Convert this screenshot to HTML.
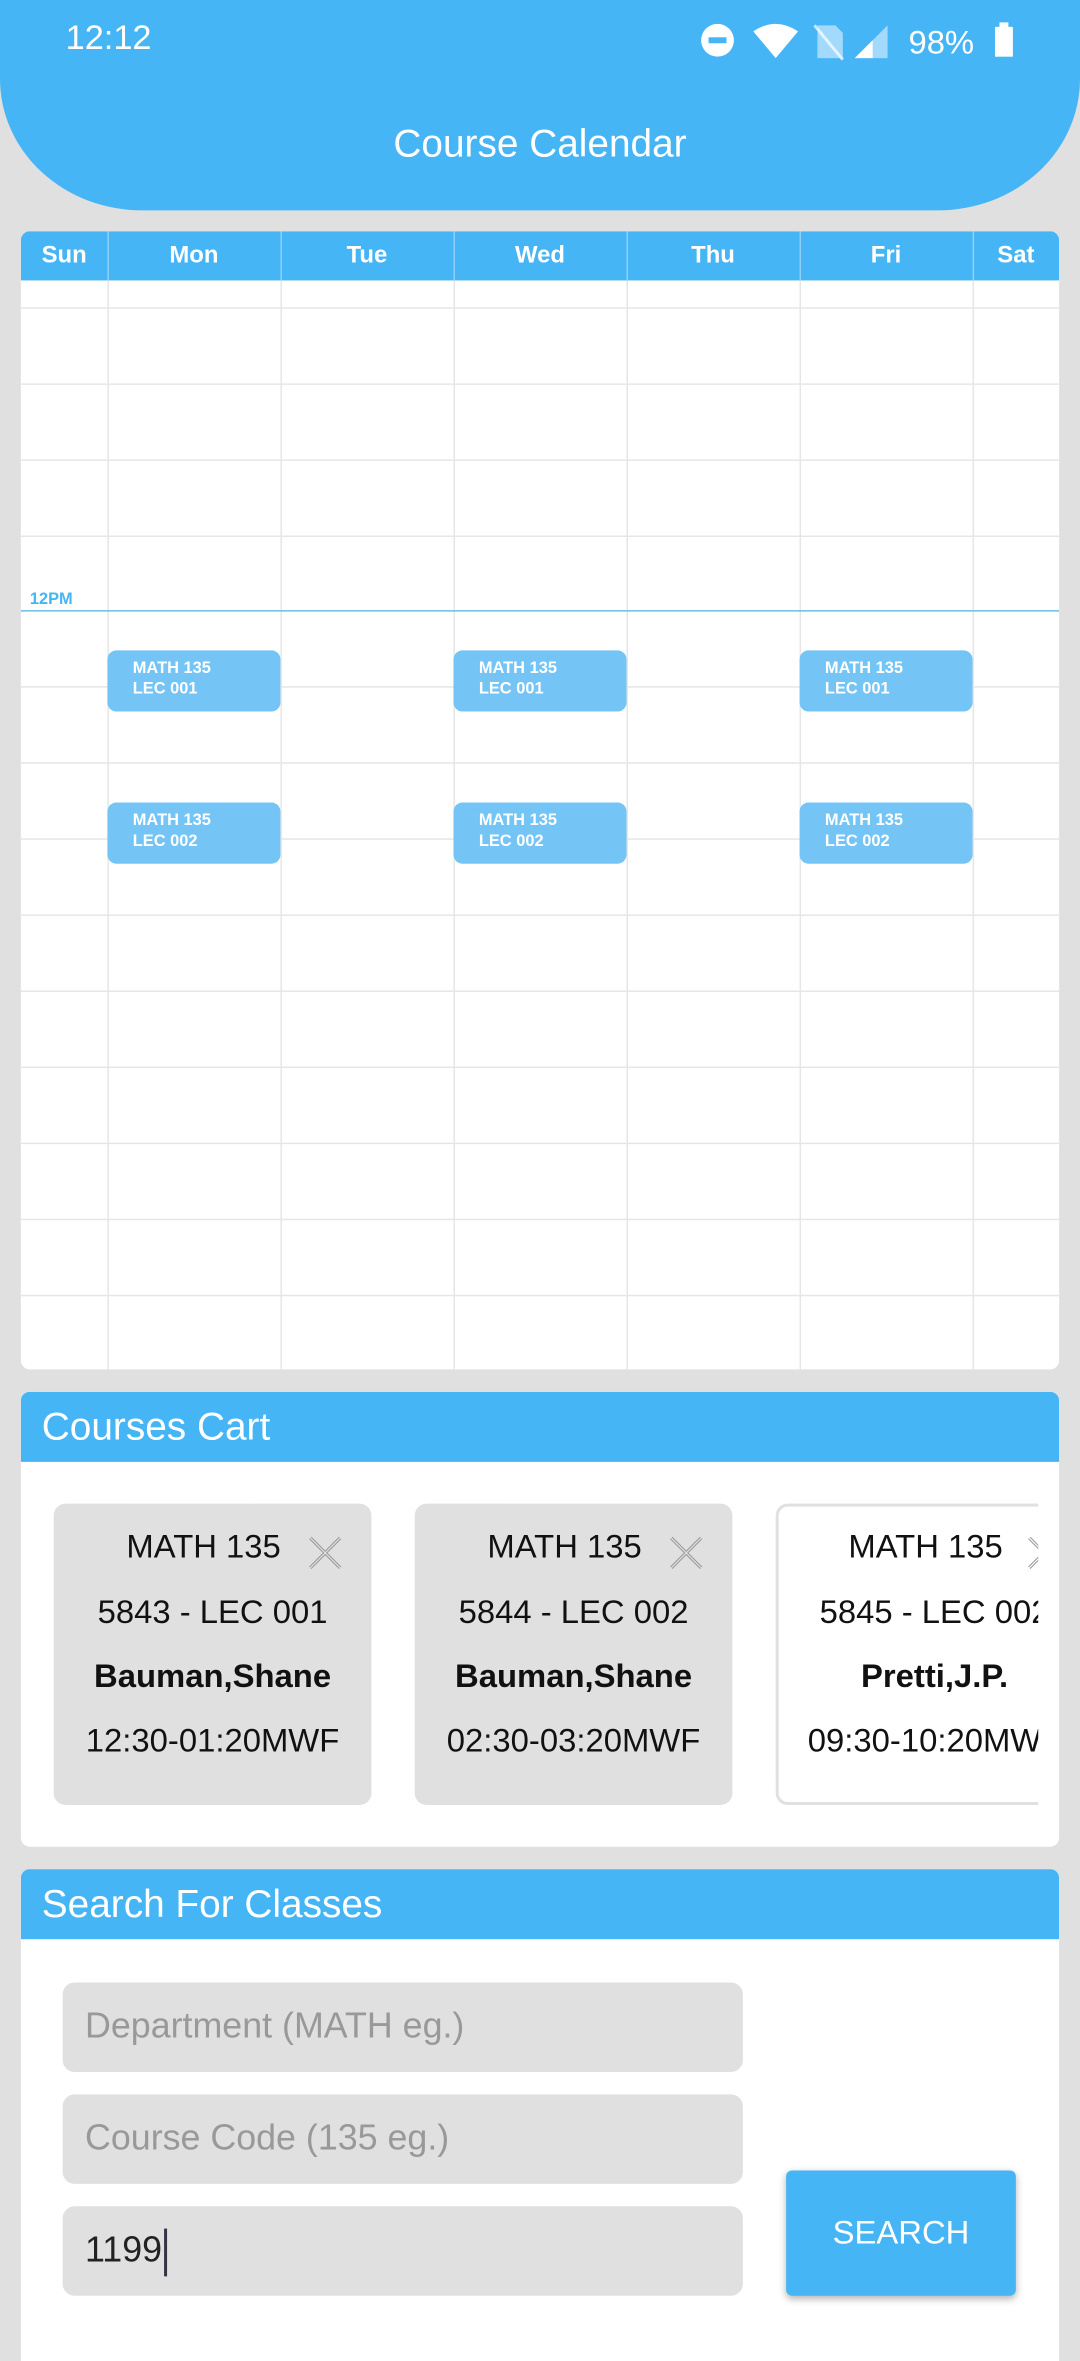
<!DOCTYPE html>
<html><head><meta charset="utf-8"><style>
html,body{margin:0;padding:0;background:#e0e0e0;overflow:hidden}
body{width:1080px;height:2340px}
#w{position:absolute;left:0;top:0;width:724px;height:1569px;transform:scale(1.49171);transform-origin:0 0;font-family:"Liberation Sans",sans-serif}
.a{position:absolute}
.hdr{left:0;top:0;width:724px;height:141px;background:#46b5f6;border-radius:0 0 95px 95px/0 0 88px 88px}
.card{background:#fff;border-radius:6px;overflow:hidden}
.bh{background:#46b5f6;color:#fff}
.hl{position:absolute;left:0;width:696px;height:1px;background:#e6e6e6}
.vl{position:absolute;top:33px;width:1px;height:730px;background:#e6e6e6}
.day{position:absolute;top:0;height:33px;line-height:33px;text-align:center;font-weight:bold;font-size:16px;color:#fff}
.ev{position:absolute;width:116px;height:41px;background:#74c5f6;border-radius:6px;color:#fff;font-weight:bold;font-size:11px;line-height:14px;box-sizing:border-box;padding:5px 0 0 17px}
.cc{position:absolute;top:75px;width:213px;height:202px;background:#e0e0e0;border-radius:8px;text-align:center;font-size:22px;color:#111;box-sizing:border-box}
.cc div{position:absolute;left:0;width:213px;text-align:center;white-space:nowrap}
.inp{position:absolute;left:28px;width:456px;height:60px;background:#e0e0e0;border-radius:8px;font-size:24px;color:#999;line-height:60px;padding-left:15px;box-sizing:border-box}
</style></head><body><div id="w">
<div class="a hdr"></div>
<div class="a" style="left:44px;top:12px;color:#fff;font-size:23px">12:12</div>
<svg class="a" style="left:468px;top:13px" width="220" height="28" viewBox="0 0 220 28">
<circle cx="13" cy="14" r="11" fill="#fff"/><rect x="7" y="12" width="12" height="4" fill="#46b5f6"/>
<path d="M37 8 Q52 -2 67 8 L52 26 Z" fill="#fff"/>
<path d="M80 4 h12 l5 5 v17 h-17z" fill="#fff" opacity=".5"/><path d="M78 4 L97 27" stroke="#fff" stroke-width="2" opacity=".7"/>
<path d="M105 26 L127 4 V26Z" fill="#fff" opacity=".5"/><path d="M105 26 L117 14 V26Z" fill="#fff"/>
<text x="141" y="23" font-family="Liberation Sans" font-size="22" fill="#fff">98%</text>
<rect x="199" y="5" width="12" height="20" fill="#fff"/><rect x="202" y="2" width="6" height="4" fill="#fff"/>
</svg>
<div class="a" style="left:0;width:724px;top:81px;text-align:center;color:#fff;font-size:26px">Course Calendar</div>

<div class="a card" style="left:14px;top:155px;width:696px;height:763px">
<div class="bh" style="position:absolute;left:0;top:0;width:696px;height:33px"></div>
<div class="day" style="left:0;width:58px">Sun</div>
<div class="day" style="left:58px;width:116px">Mon</div>
<div class="day" style="left:174px;width:116px">Tue</div>
<div class="day" style="left:290px;width:116px">Wed</div>
<div class="day" style="left:406px;width:116px">Thu</div>
<div class="day" style="left:522px;width:116px">Fri</div>
<div class="day" style="left:638px;width:58px">Sat</div>
<div class="vl" style="left:58px;top:0;height:33px;background:#8fd0f8"></div><div class="vl" style="left:174px;top:0;height:33px;background:#8fd0f8"></div><div class="vl" style="left:290px;top:0;height:33px;background:#8fd0f8"></div><div class="vl" style="left:406px;top:0;height:33px;background:#8fd0f8"></div><div class="vl" style="left:522px;top:0;height:33px;background:#8fd0f8"></div><div class="vl" style="left:638px;top:0;height:33px;background:#8fd0f8"></div>
<div class="vl" style="left:58px"></div><div class="vl" style="left:174px"></div><div class="vl" style="left:290px"></div><div class="vl" style="left:406px"></div><div class="vl" style="left:522px"></div><div class="vl" style="left:638px"></div>
<div class="hl" style="top:51px"></div><div class="hl" style="top:102px"></div><div class="hl" style="top:153px"></div><div class="hl" style="top:204px"></div>
<div class="hl" style="top:254px;background:#6bbde0"></div>
<div class="hl" style="top:305px"></div><div class="hl" style="top:356px"></div><div class="hl" style="top:407px"></div><div class="hl" style="top:458px"></div><div class="hl" style="top:509px"></div><div class="hl" style="top:560px"></div><div class="hl" style="top:611px"></div><div class="hl" style="top:662px"></div><div class="hl" style="top:713px"></div>
<div class="a" style="left:6px;top:241px;color:#46b5f6;font-weight:bold;font-size:11px">12PM</div>
<div class="ev" style="left:58px;top:281px">MATH 135<br>LEC 001</div>
<div class="ev" style="left:290px;top:281px">MATH 135<br>LEC 001</div>
<div class="ev" style="left:522px;top:281px">MATH 135<br>LEC 001</div>
<div class="ev" style="left:58px;top:383px">MATH 135<br>LEC 002</div>
<div class="ev" style="left:290px;top:383px">MATH 135<br>LEC 002</div>
<div class="ev" style="left:522px;top:383px">MATH 135<br>LEC 002</div>
</div>

<div class="a card" style="left:14px;top:933px;width:696px;height:305px">
<div class="bh" style="position:absolute;left:0;top:0;width:696px;height:47px;font-size:26px;line-height:47px;padding-left:14px;box-sizing:border-box">Courses Cart</div>
<div style="position:absolute;left:0;top:0;width:682px;height:305px;overflow:hidden">
<div class="cc" style="left:22px"><div style="top:16px;left:-6px">MATH 135</div><div style="top:60px">5843 - LEC 001</div><div style="top:103px;font-weight:bold">Bauman,Shane</div><div style="top:146px">12:30-01:20MWF</div></div>
<div class="cc" style="left:264px"><div style="top:16px;left:-6px">MATH 135</div><div style="top:60px">5844 - LEC 002</div><div style="top:103px;font-weight:bold">Bauman,Shane</div><div style="top:146px">02:30-03:20MWF</div></div>
<div class="cc" style="left:506px;background:#fff;border:2px solid #e0e0e0"><div style="top:14px;left:-8px">MATH 135</div><div style="top:58px;left:-2px">5845 - LEC 002</div><div style="top:101px;font-weight:bold;left:-2px">Pretti,J.P.</div><div style="top:144px;left:-2px">09:30-10:20MWF</div></div>
<svg class="a" style="left:192px;top:96px" width="24" height="24" viewBox="0 0 24 24"><path d="M2 2L22 22M22 2L2 22" stroke="#999" stroke-width="2.2"/><path d="M2 2L22 22M22 2L2 22" stroke="#e0e0e0" stroke-width=".8"/></svg>
<svg class="a" style="left:434px;top:96px" width="24" height="24" viewBox="0 0 24 24"><path d="M2 2L22 22M22 2L2 22" stroke="#999" stroke-width="2.2"/><path d="M2 2L22 22M22 2L2 22" stroke="#e0e0e0" stroke-width=".8"/></svg>
<svg class="a" style="left:674px;top:96px" width="24" height="24" viewBox="0 0 24 24"><path d="M2 2L22 22M22 2L2 22" stroke="#999" stroke-width="2.2"/><path d="M2 2L22 22M22 2L2 22" stroke="#fff" stroke-width=".8"/></svg>
</div>
</div>

<div class="a card" style="left:14px;top:1253px;width:696px;height:330px;border-radius:6px 6px 0 0">
<div class="bh" style="position:absolute;left:0;top:0;width:696px;height:47px;font-size:26px;line-height:47px;padding-left:14px;box-sizing:border-box">Search For Classes</div>
<div class="inp" style="top:76px">Department (MATH eg.)</div>
<div class="inp" style="top:151px">Course Code (135 eg.)</div>
<div class="inp" style="top:226px;color:#222">1199<span style="display:inline-block;width:2px;height:32px;background:#334;vertical-align:middle;margin-left:1px"></span></div>
<div class="a" style="left:513px;top:202px;width:154px;height:84px;background:#46b5f6;border-radius:4px;box-shadow:0 2px 5px rgba(0,0,0,.3);color:#fff;font-size:22px;line-height:84px;text-align:center">SEARCH</div>
</div>
</div></body></html>
